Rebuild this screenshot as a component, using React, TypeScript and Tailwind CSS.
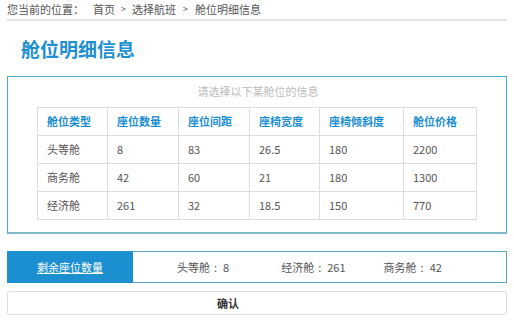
import React from "react";

const cols = ["舱位类型", "座位数量", "座位间距", "座椅宽度", "座椅倾斜度", "舱位价格"];
const widths = ["w-[70px]", "w-[71px]", "w-[71px]", "w-[70px]", "w-[84px]", "w-[73px]"];
const rows = [
  ["头等舱", "8", "83", "26.5", "180", "2200"],
  ["商务舱", "42", "60", "21", "180", "1300"],
  ["经济舱", "261", "32", "18.5", "150", "770"],
];

function Stat({ label, value, className }: { label: string; value: string; className: string }) {
  return (
    <span className={`flex items-center ${className}`}>
      <span>{label}</span>
      <span className="ml-[4px] mr-[6px]">:</span>
      <span>{value}</span>
    </span>
  );
}

export default function App() {
  return (
    <div
      className="w-[514px] h-[323px] bg-white overflow-hidden text-[11px] text-[#555]"
      style={{ fontFamily: '"Noto Sans CJK SC", "Noto Sans", sans-serif' }}
    >
      <div className="mx-[7px] pt-[2px] h-[21px] border-b-2 border-[#e3e3e3] leading-[14px] text-[#555] flex">
        <span>您当前的位置：</span>
        <span className="ml-[9px]">首页</span>
        <span className="mx-[6px] text-[9px]">&gt;</span>
        <span>选择航班</span>
        <span className="mx-[7px] text-[9px]">&gt;</span>
        <span>舱位明细信息</span>
      </div>
      <div className="pl-[21px] pt-[17px] h-[55px] text-[19px] font-bold text-[#1e8fd0] leading-[22px]">
        舱位明细信息
      </div>
      <div className="mx-[7px] h-[158px] border border-[#4aa8d8] border-b-2 border-b-[#7fb8c8] pt-[7px]">
        <div className="text-center text-[#bbb] leading-[14px] pl-[2px]">请选择以下某舱位的信息</div>
        <table className="mt-[9px] ml-[29px] border-collapse">
          <thead>
            <tr className="h-[28px]">
              {cols.map((c, i) => (
                <th
                  key={c}
                  className={`${widths[i]} border border-[#ddd] text-left pl-[9px] font-bold text-[#1b8ed0]`}
                >
                  {c}
                </th>
              ))}
            </tr>
          </thead>
          <tbody>
            {rows.map((r) => (
              <tr key={r[0]} className="h-[28px]">
                {r.map((v, i) => (
                  <td key={i} className="border border-[#ddd] pl-[9px] text-[#555]">
                    {v}
                  </td>
                ))}
              </tr>
            ))}
          </tbody>
        </table>
      </div>
      <div className="mx-[7px] mt-[17px] h-[32px] flex">
        <div className="w-[126px] bg-[#1b8fcf] text-white flex items-center justify-center underline">
          剩余座位数量
        </div>
        <div className="flex-1 border border-[#5aa6c0] border-l-0 flex items-center text-[#555]">
          <Stat label="头等舱" value="8" className="ml-[44px]" />
          <Stat label="经济舱" value="261" className="ml-[52px]" />
          <Stat label="商务舱" value="42" className="ml-[38px]" />
        </div>
      </div>
      <div className="mx-[7px] mt-[8px] h-[24px] border border-[#ddd] rounded-[3px] flex items-center justify-center pr-[58px] font-bold text-[#333] text-[11px]">
        确认
      </div>
    </div>
  );
}
